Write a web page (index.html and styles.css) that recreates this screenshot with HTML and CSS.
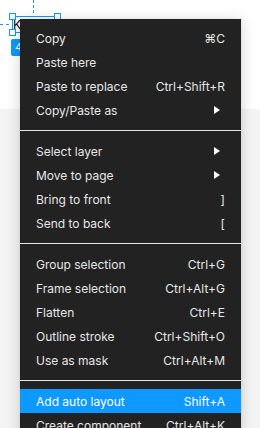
FILE: index.html
```html
<!DOCTYPE html>
<html>
<head>
<meta charset="utf-8">
<link rel="stylesheet" href="styles.css">
</head>
<body>
<div class="canvas">
  <div class="top-area"></div>
  <div class="bottom-area"></div>

  <div class="guide guide-v"></div>
  <div class="guide guide-h"></div>
  <div class="sel-box"><span class="sel-text">K</span></div>
  <div class="handle h-tl"></div>
  <div class="handle h-tr"></div>
  <div class="handle h-bl"></div>
  <div class="badge">4</div>

  <div class="menu">
    <div class="item"><span>Copy</span><span class="sc">⌘C</span></div>
    <div class="item"><span>Paste here</span></div>
    <div class="item"><span>Paste to replace</span><span class="sc">Ctrl+Shift+R</span></div>
    <div class="item"><span>Copy/Paste as</span><svg class="arrow" width="6" height="8" viewBox="0 0 6 8"><polygon points="0,0 6,4 0,8" fill="#ffffff"/></svg></div>
    <div class="sep"></div>
    <div class="item"><span>Select layer</span><svg class="arrow" width="6" height="8" viewBox="0 0 6 8"><polygon points="0,0 6,4 0,8" fill="#ffffff"/></svg></div>
    <div class="item"><span>Move to page</span><svg class="arrow" width="6" height="8" viewBox="0 0 6 8"><polygon points="0,0 6,4 0,8" fill="#ffffff"/></svg></div>
    <div class="item"><span>Bring to front</span><span class="sc">]</span></div>
    <div class="item"><span>Send to back</span><span class="sc">[</span></div>
    <div class="sep"></div>
    <div class="item"><span>Group selection</span><span class="sc">Ctrl+G</span></div>
    <div class="item"><span>Frame selection</span><span class="sc">Ctrl+Alt+G</span></div>
    <div class="item"><span>Flatten</span><span class="sc">Ctrl+E</span></div>
    <div class="item"><span>Outline stroke</span><span class="sc">Ctrl+Shift+O</span></div>
    <div class="item"><span>Use as mask</span><span class="sc">Ctrl+Alt+M</span></div>
    <div class="sep"></div>
    <div class="item active"><span>Add auto layout</span><span class="sc">Shift+A</span></div>
    <div class="item"><span>Create component</span><span class="sc">Ctrl+Alt+K</span></div>
  </div>
</div>
</body>
</html>
```

FILE: styles.css
```css
* { box-sizing: border-box; }
html, body { margin: 0; padding: 0; }
body {
  width: 260px;
  height: 428px;
  overflow: hidden;
  font-family: Inter, "Noto Sans", sans-serif;
}
.canvas {
  position: relative;
  width: 260px;
  height: 428px;
  display: flex;
  flex-direction: column;
}
.top-area { height: 109px; background: #ffffff; }
.bottom-area { flex: 1; background: #f4f4f4; }

.guide { position: absolute; }
.guide-v {
  left: 33px; top: 0; width: 0; height: 13px;
  border-left: 1px dashed #0d99ff;
}
.guide-h {
  left: 0; top: 24px; width: 9px; height: 0;
  border-top: 1px dashed #0d99ff;
}
.sel-box {
  position: absolute;
  left: 12px; top: 16px;
  width: 46px; height: 17px;
  border: 1px solid #0d99ff;
}
.sel-text {
  position: absolute;
  left: 0px; top: 1px;
  font-family: Inter, sans-serif;
  font-size: 12px;
  line-height: 14px;
  color: #000;
}
.handle {
  position: absolute;
  width: 7px; height: 7px;
  background: #fff;
  border: 1px solid #0d99ff;
}
.h-tl { left: 9px; top: 13px; }
.h-tr { left: 54px; top: 13px; }
.h-bl { left: 9px; top: 29px; }
.badge {
  position: absolute;
  left: 11px; top: 39px;
  width: 30px; height: 17px;
  background: #0d99ff;
  border-radius: 2px;
  color: #fff;
  font-size: 11px;
  line-height: 17px;
  padding-left: 4px;
}

.menu {
  position: absolute;
  left: 20px; top: 19px;
  width: 221px;
  background: #222222;
  padding-top: 7px;
  box-shadow: 0 2px 14px rgba(0,0,0,0.18), 0 0 1px rgba(0,0,0,0.2);
  color: #e6e6e6;
  font-size: 12px;
}
.item {
  height: 24px;
  display: flex;
  align-items: center;
  justify-content: space-between;
  padding: 0 16px;
  white-space: nowrap;
}
.item.active { background: #0d99ff; color: #ffffff; }
.sc { color: #e6e6e6; }
.active .sc { color: #ffffff; }
.arrow { margin-right: 5px; }
.sep {
  height: 1px;
  background: #e6e6e6;
  margin: 8px 0;
}
```
